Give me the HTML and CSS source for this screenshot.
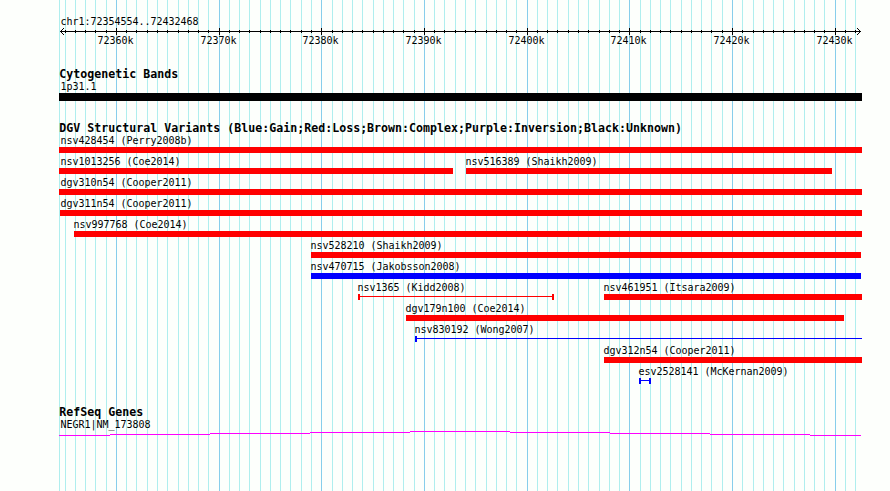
FILE: index.html
```html
<!DOCTYPE html>
<html lang="en">
<head>
  <meta charset="UTF-8" />
  <title>chr1:72354554..72432468</title>
  <link rel="stylesheet" href="styles.css">
</head>
<body>
  <div class="browser">
    <svg class="grid" id="grid" width="890" height="491" shape-rendering="crispEdges"></svg>

    <div class="ruler">
      <div class="label region">chr1:72354554..72432468</div>
      <svg class="scale" id="scale" width="890" height="9" shape-rendering="crispEdges">
        <path class="axis" d="M60 4.5H861" />
        <path class="axis" d="M60 4.5h1M61 3.5h1M61 5.5h1M62 2.5h1M62 6.5h1M63 1.5h1M63 7.5h1" />
        <path class="axis" d="M860 4.5h1M859 3.5h1M859 5.5h1M858 2.5h1M858 6.5h1M857 1.5h1M857 7.5h1" />
      </svg>
      <div class="tick-labels" id="tickLabels"></div>
    </div>

    <section class="track cytoband">
      <h2>Cytogenetic Bands</h2>
      <div class="label">1p31.1</div>
      <div class="band"></div>
    </section>

    <section class="track variants">
      <h2>DGV Structural Variants (Blue:Gain;Red:Loss;Brown:Complex;Purple:Inversion;Black:Unknown)</h2>
      <div id="lanes"></div>
    </section>

    <section class="track genes">
      <h2>RefSeq Genes</h2>
      <div class="label">NEGR1|NM_173808</div>
      <svg class="gene" width="890" height="8" shape-rendering="crispEdges">
        <path d="M59 5.5H110M110 4.5H210M210 3.5H310M310 2.5H410M410 1.5H510M510 2.5H610M610 3.5H710M710 4.5H810M810 5.5H861" />
      </svg>
    </section>
  </div>

  <script>
    const svgNS = 'http://www.w3.org/2000/svg';
    const startKb = 72354.554;
    const pxPerKb = 800 / 77.914;

    // name, start, end, type, style
    const lanes = [
      [['nsv428454 (Perry2008b)', 59, 862, 'loss']],
      [['nsv1013256 (Coe2014)', 59, 453, 'loss'], ['nsv516389 (Shaikh2009)', 466, 832, 'loss']],
      [['dgv310n54 (Cooper2011)', 59, 862, 'loss']],
      [['dgv311n54 (Cooper2011)', 60, 862, 'loss']],
      [['nsv997768 (Coe2014)', 74, 862, 'loss']],
      [['nsv528210 (Shaikh2009)', 311, 861, 'loss']],
      [['nsv470715 (Jakobsson2008)', 311, 861, 'gain']],
      [['nsv1365 (Kidd2008)', 358, 554, 'loss', 'span'], ['nsv461951 (Itsara2009)', 604, 862, 'loss']],
      [['dgv179n100 (Coe2014)', 406, 844, 'loss']],
      [['nsv830192 (Wong2007)', 415, 862, 'gain', 'span open']],
      [['dgv312n54 (Cooper2011)', 604, 862, 'loss']],
      [['esv2528141 (McKernan2009)', 639, 651, 'gain', 'span']]
    ];

    function addLine(svg, x, y1, y2, cls) {
      const line = document.createElementNS(svgNS, 'path');
      line.setAttribute('d', `M${x + 0.5} ${y1}V${y2}`);
      line.setAttribute('class', cls);
      svg.appendChild(line);
    }

    function drawScale() {
      const grid = document.getElementById('grid');
      const scale = document.getElementById('scale');
      const labels = document.getElementById('tickLabels');
      addLine(grid, 59, 0, 491, 'minor');
      for (let kb = 72355; kb <= 72432; kb++) {
        const x = Math.round(60 + (kb - startKb) * pxPerKb);
        const major = kb % 10 === 0;
        addLine(grid, x, 0, 491, major ? 'major' : 'minor');
        addLine(scale, x, major ? 1 : 3, major ? 8 : 6, 'axis');
        if (major) {
          const label = document.createElement('span');
          label.className = 'label tick-label';
          label.textContent = kb + 'k';
          label.style.marginLeft = (x - 18.5) + 'px';
          labels.appendChild(label);
        }
      }
    }

    function drawLanes() {
      const container = document.getElementById('lanes');
      lanes.forEach(features => {
        const lane = document.createElement('div');
        lane.className = 'lane';
        features.forEach(([name, start, end, type, style]) => {
          const feature = document.createElement('div');
          feature.className = 'feature';
          feature.innerHTML = `<div class="label" style="margin-left:${Math.max(60, start - 1) + 0.4}px">${name}</div>
            <div class="bar ${type} ${style || ''}" style="margin-left:${start}px;width:${end - start}px"></div>`;
          lane.appendChild(feature);
        });
        container.appendChild(lane);
      });
    }

    drawScale();
    drawLanes();
  </script>
</body>
</html>
```
FILE: styles.css
```css
body {
  margin: 0;
  background-color: #fdfffc;
  color: #000;
  font-family: "DejaVu Sans Mono", monospace;
}
.browser {
  position: relative;
  width: 890px;
  height: 491px;
  overflow: hidden;
  isolation: isolate;
}
.grid {
  position: absolute;
  top: 0;
  left: 0;
  z-index: -1;
}
svg {
  display: block;
}
path {
  fill: none;
  stroke-width: 1;
}
.minor {
  stroke: #afeeee;
}
.major {
  stroke: #87ceeb;
}
.axis {
  stroke: #000;
}
.label {
  height: 12px;
  font-size: 10px;
  line-height: 12px;
  letter-spacing: -0.02px;
  white-space: pre;
}
h2 {
  height: 13px;
  margin: 0;
  padding-left: 59.3px;
  font-size: 11.6px;
  line-height: 12px;
  letter-spacing: 0.016px;
  white-space: pre;
}
.ruler {
  height: 68px;
  padding-top: 16px;
  box-sizing: border-box;
}
.region {
  height: 11px;
  padding-left: 60.4px;
}
.tick-labels {
  display: grid;
  margin-top: -1px;
}
.tick-label {
  grid-area: 1 / 1;
}
.cytoband {
  height: 54px;
}
.cytoband .label, .genes .label {
  padding-left: 60.4px;
}
.band {
  height: 8px;
  width: 803px;
  margin-left: 59px;
  background-color: #000;
}
.variants {
  height: 284px;
}
.lane {
  display: grid;
  height: 21px;
}
.feature {
  grid-area: 1 / 1;
}
.bar {
  height: 6px;
  box-sizing: border-box;
  background-color: currentColor;
}
.loss {
  color: #f00;
}
.gain {
  color: #00f;
}
.span {
  background: linear-gradient(currentColor, currentColor) 0 2px / 100% 1px no-repeat;
  border-left: 2px solid;
  border-right: 2px solid;
}
.open {
  border-right: none;
}
.genes .label {
  height: 11px;
}
.gene path {
  stroke: #f0f;
}
```
